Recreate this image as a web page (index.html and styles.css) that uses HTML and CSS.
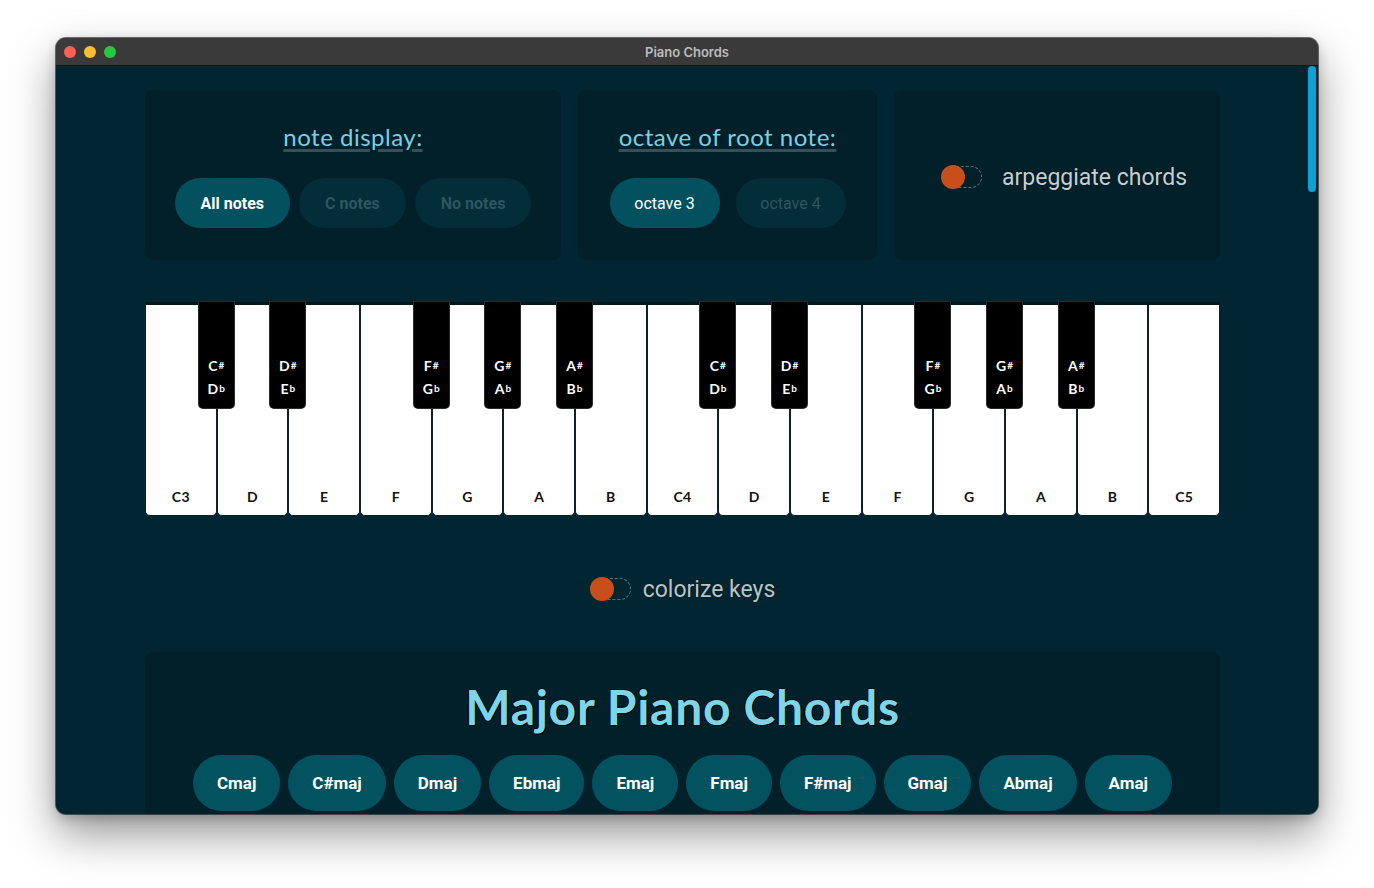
FILE: index.html
```html
<!DOCTYPE html>
<html lang="en">
<head>
<meta charset="utf-8">
<title>Piano Chords</title>
<link rel="stylesheet" href="styles.css">
</head>
<body>
<div class="window">
  <div class="titlebar">
    <div class="lights">
      <span class="light red"></span>
      <span class="light yellow"></span>
      <span class="light green"></span>
    </div>
    <div class="wtitle">Piano Chords</div>
  </div>
  <div class="content">
    <div class="scrollthumb"></div>
    <div class="main">
      <div class="panels">
        <section class="panel panel-notes">
          <h2 class="ptitle">note display:</h2>
          <div class="btnrow">
            <button class="pill bold active">All notes</button>
            <button class="pill bold">C notes</button>
            <button class="pill bold">No notes</button>
          </div>
        </section>
        <section class="panel panel-octave">
          <h2 class="ptitle">octave of root note:</h2>
          <div class="btnrow wide">
            <button class="pill active">octave 3</button>
            <button class="pill">octave 4</button>
          </div>
        </section>
        <section class="panel panel-arp">
          <div class="toggle-row">
            <span class="toggle"><span class="knob"></span></span>
            <span class="tlabel">arpeggiate chords</span>
          </div>
        </section>
      </div>

      <div class="piano">
        <div class="wkey"><span class="wlabel">C3</span><div class="bkey"><span>C<small>#</small></span><span>D<small>b</small></span></div></div>
        <div class="wkey"><span class="wlabel">D</span><div class="bkey"><span>D<small>#</small></span><span>E<small>b</small></span></div></div>
        <div class="wkey"><span class="wlabel">E</span></div>
        <div class="wkey"><span class="wlabel">F</span><div class="bkey"><span>F<small>#</small></span><span>G<small>b</small></span></div></div>
        <div class="wkey"><span class="wlabel">G</span><div class="bkey"><span>G<small>#</small></span><span>A<small>b</small></span></div></div>
        <div class="wkey"><span class="wlabel">A</span><div class="bkey"><span>A<small>#</small></span><span>B<small>b</small></span></div></div>
        <div class="wkey"><span class="wlabel">B</span></div>
        <div class="wkey"><span class="wlabel">C4</span><div class="bkey"><span>C<small>#</small></span><span>D<small>b</small></span></div></div>
        <div class="wkey"><span class="wlabel">D</span><div class="bkey"><span>D<small>#</small></span><span>E<small>b</small></span></div></div>
        <div class="wkey"><span class="wlabel">E</span></div>
        <div class="wkey"><span class="wlabel">F</span><div class="bkey"><span>F<small>#</small></span><span>G<small>b</small></span></div></div>
        <div class="wkey"><span class="wlabel">G</span><div class="bkey"><span>G<small>#</small></span><span>A<small>b</small></span></div></div>
        <div class="wkey"><span class="wlabel">A</span><div class="bkey"><span>A<small>#</small></span><span>B<small>b</small></span></div></div>
        <div class="wkey"><span class="wlabel">B</span></div>
        <div class="wkey"><span class="wlabel">C5</span></div>
      </div>

      <div class="toggle-row center">
        <span class="toggle"><span class="knob"></span></span>
        <span class="tlabel small">colorize keys</span>
      </div>

      <section class="chords">
        <h1 class="ctitle">Major Piano Chords</h1>
        <div class="chordrow">
          <button class="chord">Cmaj</button>
          <button class="chord">C#maj</button>
          <button class="chord">Dmaj</button>
          <button class="chord">Ebmaj</button>
          <button class="chord">Emaj</button>
          <button class="chord">Fmaj</button>
          <button class="chord">F#maj</button>
          <button class="chord">Gmaj</button>
          <button class="chord">Abmaj</button>
          <button class="chord">Amaj</button>
        </div>
      </section>
    </div>
  </div>
</div>
</body>
</html>
```

FILE: styles.css
```css
* { box-sizing: border-box; }

html, body {
  margin: 0;
  padding: 0;
  background: #ffffff;
  width: 1374px;
  height: 888px;
  overflow: hidden;
  font-family: Roboto, "Liberation Sans", sans-serif;
}

.window {
  margin: 38px 0 0 56px;
  width: 1262px;
  height: 776px;
  border-radius: 10px;
  overflow: hidden;
  background: #022631;
  box-shadow: 0 0 0 1px rgba(0, 0, 0, 0.55), 0 20px 45px rgba(0, 0, 0, 0.42), 0 4px 12px rgba(0, 0, 0, 0.2);
  display: flex;
  flex-direction: column;
}

.titlebar {
  height: 28px;
  flex: none;
  background: #3a3a3a;
  border-bottom: 1px solid #141414;
  display: flex;
  align-items: center;
  position: relative;
}

.lights {
  display: flex;
  gap: 8px;
  padding-left: 8px;
}

.light {
  width: 12px;
  height: 12px;
  border-radius: 50%;
  display: block;
}
.red { background: #fe5f57; }
.yellow { background: #febc2e; }
.green { background: #28c840; }

.wtitle {
  position: absolute;
  left: 0;
  right: 0;
  text-align: center;
  font-family: Inter, "Liberation Sans", sans-serif;
  font-weight: 600;
  font-size: 13px;
  color: #bcbcbc;
  pointer-events: none;
}

.content {
  flex: 1;
  position: relative;
  overflow: hidden;
  padding-right: 9px;
  background: #022631;
}

.scrollthumb {
  position: absolute;
  right: 2px;
  top: 0;
  width: 8px;
  height: 126px;
  border-radius: 4px;
  background: #0ea1d4;
}

.main {
  width: 1075px;
  margin: 0 auto;
  padding-top: 24px;
}

/* top panels */
.panels {
  display: flex;
  gap: 17px;
  height: 170px;
}

.panel {
  background: #01202a;
  border-radius: 8px;
  display: flex;
  flex-direction: column;
  align-items: center;
  padding-top: 31px;
}

.panel-notes { width: 416px; }
.panel-octave { width: 299px; }
.panel-arp {
  width: 326px;
  justify-content: center;
  padding-top: 4px;
  padding-left: 14px;
}

.ptitle {
  margin: 0;
  font-family: Lato, "Noto Sans", sans-serif;
  font-weight: 400;
  font-size: 24px;
  line-height: 32px;
  letter-spacing: 0.5px;
  color: #7ccfe0;
  text-decoration: underline;
  text-decoration-color: #34505b;
  text-decoration-thickness: 3px;
  text-underline-offset: 3px;
}

.btnrow {
  display: flex;
  gap: 9px;
  margin-top: 25px;
}
.btnrow.wide { gap: 16px; }

.pill {
  height: 50px;
  border-radius: 25px;
  border: none;
  padding: 0 26px;
  background: #022d39;
  color: #2d5661;
  font-family: Roboto, "Liberation Sans", sans-serif;
  font-size: 16px;
  font-weight: 400;
}
.pill.bold { font-weight: 700; }
.pill.active {
  background: #03515f;
  color: #ffffff;
}
.panel-octave .pill { width: 110px; padding: 0; }

/* toggles */
.toggle-row {
  display: flex;
  align-items: center;
  gap: 20px;
}
.toggle-row.center {
  justify-content: center;
  gap: 12px;
  height: 30px;
  margin-top: 58px;
}

.toggle {
  position: relative;
  display: block;
  width: 37px;
  height: 22px;
  margin-left: 4px;
  border: 1px dashed #42788a;
  border-radius: 11px;
}

.knob {
  position: absolute;
  left: -5px;
  top: -2px;
  width: 24px;
  height: 24px;
  border-radius: 50%;
  background: #c84e1b;
}

.tlabel {
  font-family: Roboto, "Liberation Sans", sans-serif;
  font-size: 23px;
  color: #c6cfd3;
  text-shadow: 0 0 1px #000;
}
.tlabel.small {
  color: #bac5c9;
}

/* piano */
.piano {
  margin-top: 42px;
  height: 214px;
  display: flex;
  border-top: 3px solid #07161b;
}

.wkey {
  flex: 1;
  position: relative;
  background: #ffffff;
  border: 1px solid #0b222a;
  border-top: none;
  border-radius: 0 0 5px 5px;
  display: flex;
  flex-direction: column;
  justify-content: flex-end;
  align-items: center;
  padding-bottom: 10px;
}

.wlabel {
  font-family: Lato, "Noto Sans", sans-serif;
  font-weight: 700;
  font-size: 14px;
  letter-spacing: 0.3px;
  color: #111;
}

.bkey {
  position: absolute;
  z-index: 2;
  top: -3px;
  right: -18px;
  width: 35px;
  height: 106px;
  background: #000;
  border-radius: 0 0 4px 4px;
  box-shadow: 0 0 0 1px #2a2a2a;
  display: flex;
  flex-direction: column;
  justify-content: flex-end;
  align-items: center;
  padding-bottom: 8px;
  color: #fff;
  font-family: Lato, "Noto Sans", sans-serif;
  font-weight: 700;
  font-size: 14px;
  line-height: 22px;
}

.bkey small {
  font-size: 10px;
  font-weight: 700;
  vertical-align: 2px;
  margin-left: 1px;
}

/* chords */
.chords {
  margin-top: 48px;
  background: #01202a;
  border-radius: 8px;
  padding: 27px 40px 30px;
}

.ctitle {
  margin: 0;
  text-align: center;
  font-family: Lato, "Noto Sans", sans-serif;
  font-weight: 700;
  font-size: 48px;
  line-height: 56px;
  letter-spacing: 0.7px;
  color: #7dd6e7;
  text-shadow: 1px 1px 0 #000, -1px 0 0 #000, 0 -1px 0 rgba(0,0,0,0.6);
}

.chordrow {
  margin-top: 20px;
  display: flex;
  flex-wrap: wrap;
  justify-content: center;
  gap: 8px;
}

.chord {
  height: 56px;
  border-radius: 28px;
  border: none;
  padding: 0 24px;
  background: #03525f;
  color: #ffffff;
  font-family: Roboto, "Liberation Sans", sans-serif;
  font-weight: 700;
  font-size: 17px;
}
```
